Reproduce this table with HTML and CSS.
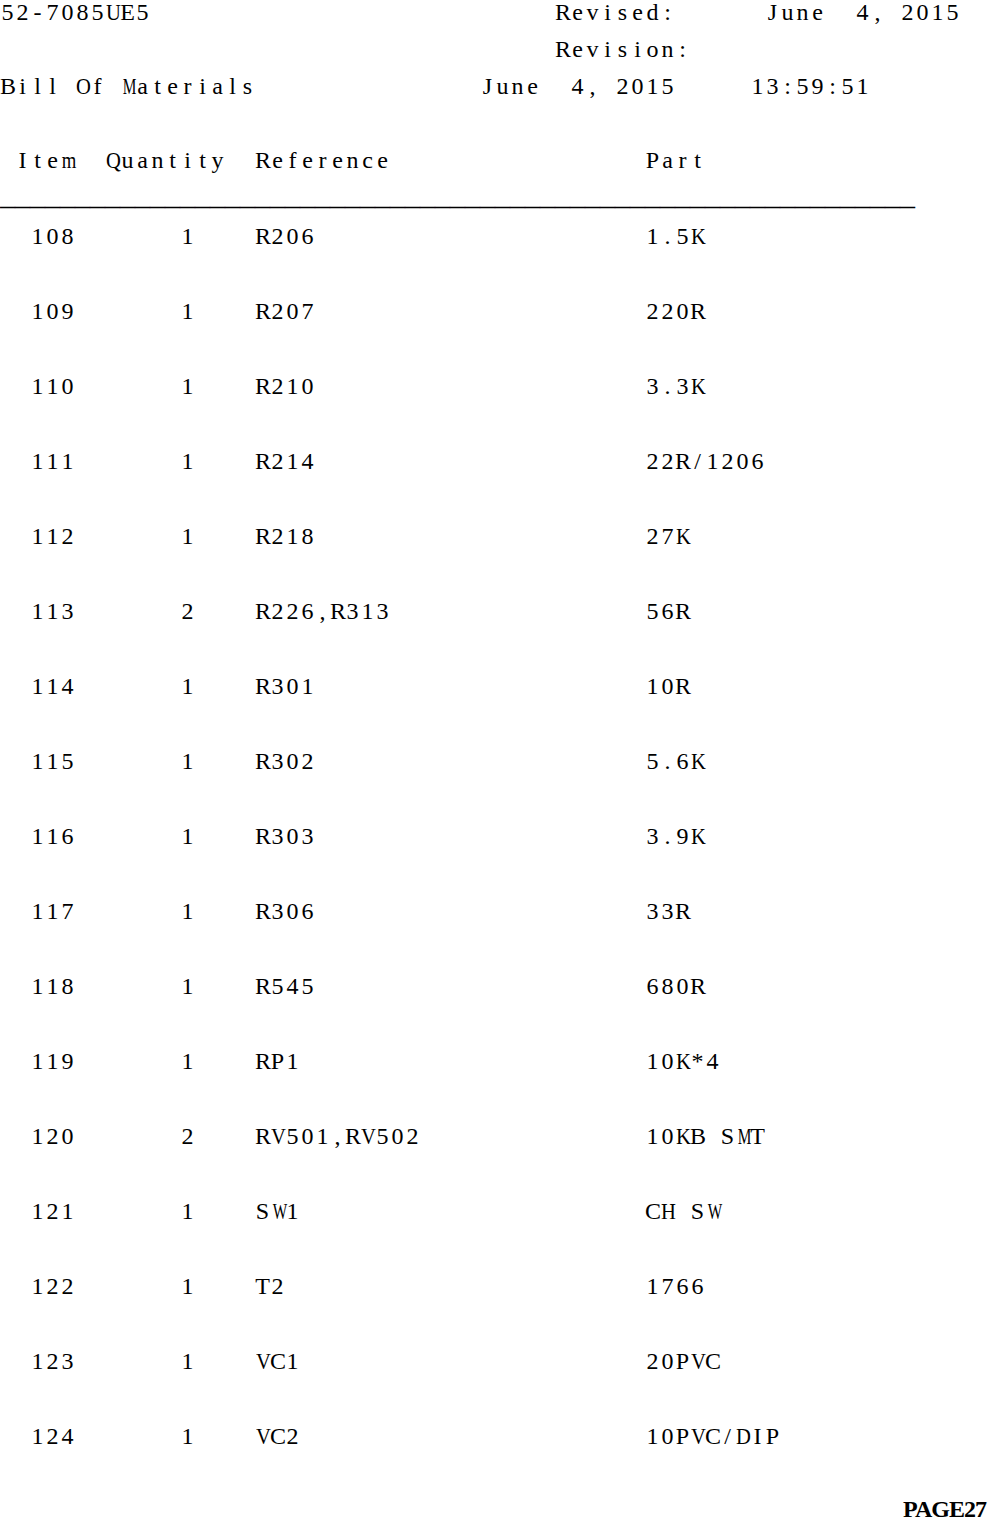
FILE: index.html
```html
<!DOCTYPE html>
<html lang="en">
<head>
<meta charset="utf-8">
<title>Bill Of Materials</title>
<link rel="stylesheet" href="styles.css">
</head>
<body>
<div class="page">
  <div class="line head-1">
    <span class="mono">52-7085UE5</span>
    <span class="mono">Revised:</span>
    <span class="mono">June  4, 2015</span>
  </div>
  <div class="line head-2">
    <span class="mono">Revision:</span>
  </div>
  <div class="line head-3">
    <span class="mono">Bill Of Materials</span>
    <span class="mono">June  4, 2015</span>
    <span class="mono">13:59:51</span>
  </div>

  <div class="line thead">
    <span class="mono">Item</span>
    <span class="mono">Quantity</span>
    <span class="mono">Reference</span>
    <span class="mono">Part</span>
  </div>
  <div class="rule">_____________________________________________________________</div>

  <div class="rows">
    <div class="line row"><span class="mono">108</span><span class="mono">1</span><span class="mono">R206</span><span class="mono">1.5K</span></div>
    <div class="line row"><span class="mono">109</span><span class="mono">1</span><span class="mono">R207</span><span class="mono">220R</span></div>
    <div class="line row"><span class="mono">110</span><span class="mono">1</span><span class="mono">R210</span><span class="mono">3.3K</span></div>
    <div class="line row"><span class="mono">111</span><span class="mono">1</span><span class="mono">R214</span><span class="mono">22R/1206</span></div>
    <div class="line row"><span class="mono">112</span><span class="mono">1</span><span class="mono">R218</span><span class="mono">27K</span></div>
    <div class="line row"><span class="mono">113</span><span class="mono">2</span><span class="mono">R226,R313</span><span class="mono">56R</span></div>
    <div class="line row"><span class="mono">114</span><span class="mono">1</span><span class="mono">R301</span><span class="mono">10R</span></div>
    <div class="line row"><span class="mono">115</span><span class="mono">1</span><span class="mono">R302</span><span class="mono">5.6K</span></div>
    <div class="line row"><span class="mono">116</span><span class="mono">1</span><span class="mono">R303</span><span class="mono">3.9K</span></div>
    <div class="line row"><span class="mono">117</span><span class="mono">1</span><span class="mono">R306</span><span class="mono">33R</span></div>
    <div class="line row"><span class="mono">118</span><span class="mono">1</span><span class="mono">R545</span><span class="mono">680R</span></div>
    <div class="line row"><span class="mono">119</span><span class="mono">1</span><span class="mono">RP1</span><span class="mono">10K*4</span></div>
    <div class="line row"><span class="mono">120</span><span class="mono">2</span><span class="mono">RV501,RV502</span><span class="mono">10KB SMT</span></div>
    <div class="line row"><span class="mono">121</span><span class="mono">1</span><span class="mono">SW1</span><span class="mono">CH SW</span></div>
    <div class="line row"><span class="mono">122</span><span class="mono">1</span><span class="mono">T2</span><span class="mono">1766</span></div>
    <div class="line row"><span class="mono">123</span><span class="mono">1</span><span class="mono">VC1</span><span class="mono">20PVC</span></div>
    <div class="line row"><span class="mono">124</span><span class="mono">1</span><span class="mono">VC2</span><span class="mono">10PVC/DIP</span></div>
  </div>

  <div class="page-no">PAGE27</div>
</div>
<script src="script.js"></script>
</body>
</html>
```

FILE: styles.css
```css
html, body {
  margin: 0;
  padding: 0;
  background: #ffffff;
}

body {
  color: #000000;
  font-family: "Liberation Serif", "Times New Roman", serif;
  font-size: 24px;
  line-height: 24px;
  overflow: hidden;
}

.page {
  display: flex;
  flex-direction: column;
  width: 990px;
}

.line {
  display: grid;
  height: 24px;
  white-space: pre;
}

.mono {
  white-space: pre;
}

.ch {
  display: inline-block;
  width: 15px;
  text-align: center;
  white-space: pre;
}

.ch.wide {
  transform: scaleX(0.64);
}

.ch.semi {
  transform: scaleX(0.78);
}

.ch.broad {
  transform: scaleX(0.86);
}

.head-1 {
  grid-template-columns: 555px 210px auto;
}

.head-2 {
  margin-top: 13px;
  padding-left: 555px;
}

.head-3 {
  margin-top: 13px;
  grid-template-columns: 480px 270px auto;
}

.thead {
  margin-top: 50px;
  padding-left: 15px;
  grid-template-columns: 90px 150px 390px auto;
}

.rule {
  margin-top: 8px;
  font-size: 30px;
  line-height: 30px;
  height: 30px;
  white-space: pre;
}

.rows {
  margin-top: 14px;
  display: flex;
  flex-direction: column;
  gap: 51px;
}

.row {
  padding-left: 30px;
  grid-template-columns: 150px 75px 390px auto;
}

.page-no {
  margin-top: 49px;
  text-align: right;
  padding-right: 4px;
  font-weight: bold;
  letter-spacing: -1px;
}
```

FILE: script.js
```js
document.querySelectorAll('.mono').forEach(function (el) {
  var text = el.textContent;
  el.textContent = '';
  Array.from(text).forEach(function (c) {
    var s = document.createElement('span');
    s.className = 'ch';
    if (/[MW]/.test(c)) {
      s.classList.add('wide');
    } else if (/[mw]/.test(c)) {
      s.classList.add('semi');
    } else if (/[ADGHKOQUVXY]/.test(c)) {
      s.classList.add('broad');
    }
    s.textContent = c;
    el.appendChild(s);
  });
});
```
